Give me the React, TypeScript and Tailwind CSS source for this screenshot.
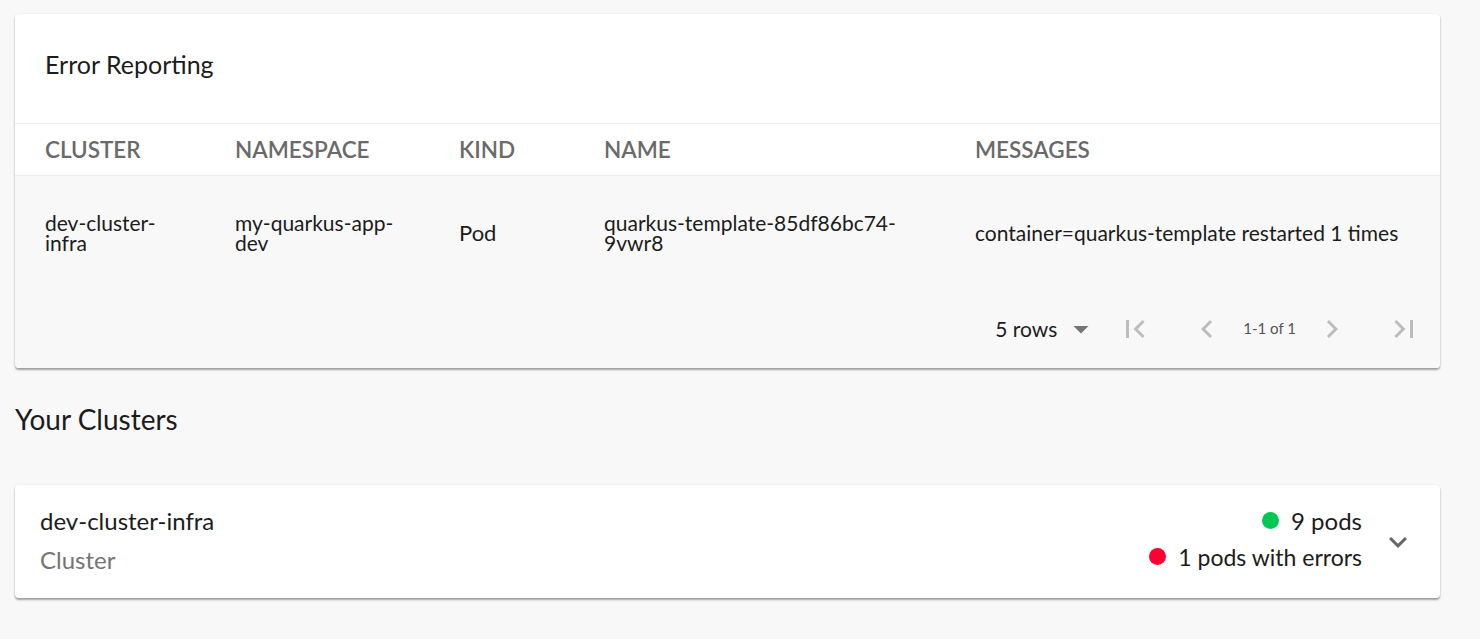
import React from 'react';

const FONT = "font-['Lato','Noto_Sans',sans-serif]";

type Row = {
  cluster: string;
  namespace: string;
  kind: string;
  name: string;
  message: string;
};

const rows: Row[] = [
  {
    cluster: 'dev-cluster-infra',
    namespace: 'my-quarkus-app-dev',
    kind: 'Pod',
    name: 'quarkus-template-85df86bc74-9vwr8',
    message: 'container=quarkus-template restarted 1 times',
  },
];

const Icon = ({ d, className }: { d: string; className?: string }) => (
  <svg viewBox="0 0 24 24" className={className} fill="currentColor">
    <path d={d} />
  </svg>
);

const FIRST = 'M18.41 16.59L13.82 12l4.59-4.59L17 6l-6 6 6 6zM6 6h2v12H6z';
const LAST = 'M5.59 7.41L10.18 12l-4.59 4.59L7 18l6-6-6-6zM16 6h2v12h-2z';
const PREV = 'M15.41 7.41L14 6l-6 6 6 6 1.41-1.41L10.83 12z';
const NEXT = 'M10 6L8.59 7.41 13.17 12l-4.58 4.59L10 18l6-6z';
const DROP = 'M7 10l5 5 5-5z';
const EXPAND = 'M16.59 8.59L12 13.17 7.41 8.59 6 10l6 6 6-6z';

const cols = 'grid grid-cols-[190px_224px_145px_371px_1fr]';

const ErrorReporting = () => (
  <div className="bg-white rounded-[4px] shadow-[0_2px_2px_rgba(0,0,0,0.35),0_0_2px_rgba(0,0,0,0.08)] overflow-hidden">
    <div className="h-[110px] px-[30px] pt-[35px] border-b border-[#eeeeee]">
      <h2 className="text-[25px] leading-[30px] text-[#1c1c1c]">Error Reporting</h2>
    </div>
    <div className={`${cols} h-[52px] items-center pl-[30px] border-b border-[#eeeeee]`}>
      {['CLUSTER', 'NAMESPACE', 'KIND', 'NAME', 'MESSAGES'].map((h) => (
        <div key={h} className="text-[22.5px] font-semibold text-[#6a6a6a]">
          {h}
        </div>
      ))}
    </div>
    <div className="bg-[#f8f8f8]">
      {rows.map((r, i) => (
        <div key={i} className={`${cols} h-[113px] items-center pl-[30px] text-[21px] leading-[20px] text-[#1c1c1c]`}>
          <div className="w-[130px]">{r.cluster}</div>
          <div className="w-[175px]">{r.namespace}</div>
          <div className="text-[22px]">{r.kind}</div>
          <div className="w-[320px]">{r.name}</div>
          <div>{r.message}</div>
        </div>
      ))}
      <div className="h-[79px] flex items-center justify-end pr-[12px]">
        <div className="flex items-center gap-[6px] mr-[12px]">
          <span className="text-[21px] text-[#1c1c1c]">5 rows</span>
          <Icon d={DROP} className="w-9 h-9 text-[#757575]" />
        </div>
        <button className="w-12 h-12 flex items-center justify-center text-[#bdbdbd]">
          <Icon d={FIRST} className="w-9 h-9" />
        </button>
        <button className="w-12 h-12 ml-6 flex items-center justify-center text-[#bdbdbd]">
          <Icon d={PREV} className="w-9 h-9" />
        </button>
        <span className="mx-3 text-[15px] text-[#555555]">1-1 of 1</span>
        <button className="w-12 h-12 flex items-center justify-center text-[#bdbdbd]">
          <Icon d={NEXT} className="w-9 h-9" />
        </button>
        <button className="w-12 h-12 ml-6 flex items-center justify-center text-[#bdbdbd]">
          <Icon d={LAST} className="w-9 h-9" />
        </button>
      </div>
    </div>
  </div>
);

const ClusterCard = () => (
  <div className="bg-white rounded-[4px] shadow-[0_2px_2px_rgba(0,0,0,0.35),0_0_2px_rgba(0,0,0,0.08)] h-[113px] flex items-center pl-[25px] pr-[24px]">
    <div className="flex-1 mb-[2px]">
      <div className="text-[24px] leading-[28px] text-[#1c1c1c]">dev-cluster-infra</div>
      <div className="mt-[11px] text-[24px] leading-[28px] text-[#757575]">Cluster</div>
    </div>
    <div className="flex flex-col items-end gap-[8px] mb-[6px]">
      <div className="flex items-center gap-[12px] text-[24px] leading-[28px] text-[#1c1c1c]">
        <span className="w-[17px] h-[17px] rounded-full bg-[#00c853]" />
        9 pods
      </div>
      <div className="flex items-center gap-[12px] text-[23px] leading-[28px] text-[#1c1c1c]">
        <span className="w-[17px] h-[17px] rounded-full bg-[#ff0033]" />
        1 pods with errors
      </div>
    </div>
    <Icon d={EXPAND} className="w-9 h-9 ml-[18px] text-[#666666]" />
  </div>
);

export default function App() {
  return (
    <div className={`${FONT} min-h-screen bg-[#f8f8f8] pl-[15px] pr-[40px] pt-[14px]`}>
      <ErrorReporting />
      <h2 className="mt-[33px] text-[28px] leading-[36px] text-[#1c1c1c]">Your Clusters</h2>
      <div className="mt-[48px]">
        <ClusterCard />
      </div>
    </div>
  );
}
